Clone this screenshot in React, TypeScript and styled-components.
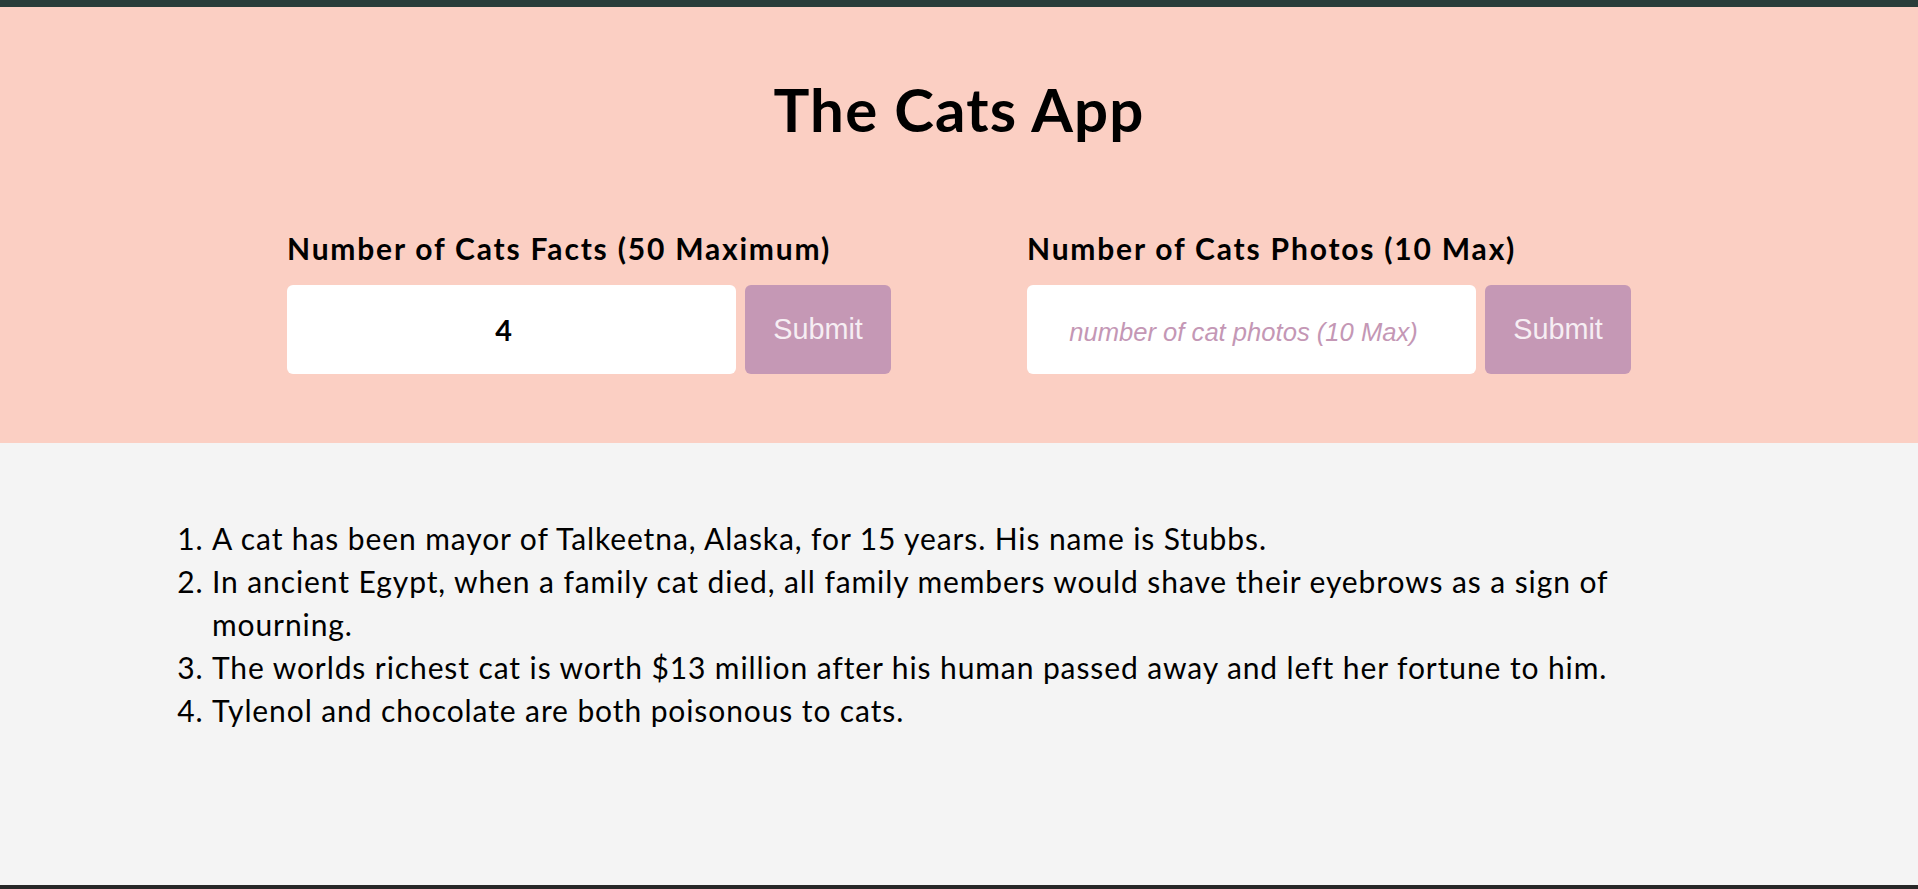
import React from "react";
import styled, { createGlobalStyle } from "styled-components";

const GlobalStyle = createGlobalStyle`
  html, body {
    margin: 0;
    padding: 0;
  }
  body {
    font-family: Lato, "Noto Sans", sans-serif;
    background: #f4f4f4;
    color: #000;
  }
  * { box-sizing: border-box; }
`;

const Page = styled.div`
  min-height: 100vh;
  display: flex;
  flex-direction: column;
  border-top: 7px solid #293d3a;
  border-bottom: 4px solid #272727;
`;

const Header = styled.header`
  background: #fbcfc3;
  padding: 66px 0 69px;
  display: flex;
  flex-direction: column;
  align-items: center;
`;

const Title = styled.h1`
  margin: 0;
  font-family: Lato, sans-serif;
  font-weight: 700;
  font-size: 60px;
  line-height: 72px;
  letter-spacing: 1.2px;
`;

const Forms = styled.div`
  display: flex;
  gap: 136px;
  margin-top: 85px;
`;

const FormGroup = styled.form`
  display: flex;
  flex-direction: column;
`;

const Label = styled.label`
  font-family: Lato, sans-serif;
  font-weight: 700;
  font-size: 30px;
  line-height: 36px;
  letter-spacing: 1.8px;
  white-space: nowrap;
`;

const Row = styled.div`
  display: flex;
  gap: 9px;
  margin-top: 19px;
`;

const Input = styled.input`
  width: 449px;
  height: 89px;
  border: none;
  border-radius: 6px;
  background: #fff;
  text-align: center;
  font-family: Lato, sans-serif;
  font-weight: 700;
  font-size: 28.8px;
  color: #000;
  padding: 0 16px 0 0;
  outline: none;
  &::placeholder {
    font-family: "Liberation Sans", Arial, sans-serif;
    font-style: italic;
    font-weight: 400;
    font-size: 25.6px;
    letter-spacing: 0;
    color: #c497b5;
  }
  &::-webkit-inner-spin-button,
  &::-webkit-outer-spin-button {
    -webkit-appearance: none;
    margin: 0;
  }
`;

const Button = styled.button`
  width: 146px;
  height: 89px;
  border: none;
  border-radius: 6px;
  background: #c598b5;
  color: #f6eef3;
  font-family: "Liberation Sans", Arial, sans-serif;
  font-size: 28.8px;
  cursor: pointer;
`;

const Main = styled.main`
  flex: 1;
  padding: 74px 0 0 172px;
`;

const FactList = styled.ol`
  margin: 0;
  padding-left: 40px;
  width: 1508px;
  font-family: Lato, sans-serif;
  font-size: 30px;
  line-height: 43px;
  letter-spacing: 0.9px;
`;

const facts = [
  "A cat has been mayor of Talkeetna, Alaska, for 15 years. His name is Stubbs.",
  "In ancient Egypt, when a family cat died, all family members would shave their eyebrows as a sign of mourning.",
  "The worlds richest cat is worth $13 million after his human passed away and left her fortune to him.",
  "Tylenol and chocolate are both poisonous to cats.",
];

export default function App() {
  return (
    <>
      <GlobalStyle />
      <Page>
        <Header>
          <Title>The Cats App</Title>
          <Forms>
            <FormGroup onSubmit={(e) => e.preventDefault()}>
              <Label htmlFor="facts">Number of Cats Facts (50 Maximum)</Label>
              <Row>
                <Input id="facts" type="number" defaultValue={4} />
                <Button type="submit">Submit</Button>
              </Row>
            </FormGroup>
            <FormGroup onSubmit={(e) => e.preventDefault()}>
              <Label htmlFor="photos">Number of Cats Photos (10 Max)</Label>
              <Row>
                <Input id="photos" type="number" placeholder="number of cat photos (10 Max)" />
                <Button type="submit">Submit</Button>
              </Row>
            </FormGroup>
          </Forms>
        </Header>
        <Main>
          <FactList>
            {facts.map((f) => (
              <li key={f}>{f}</li>
            ))}
          </FactList>
        </Main>
      </Page>
    </>
  );
}
